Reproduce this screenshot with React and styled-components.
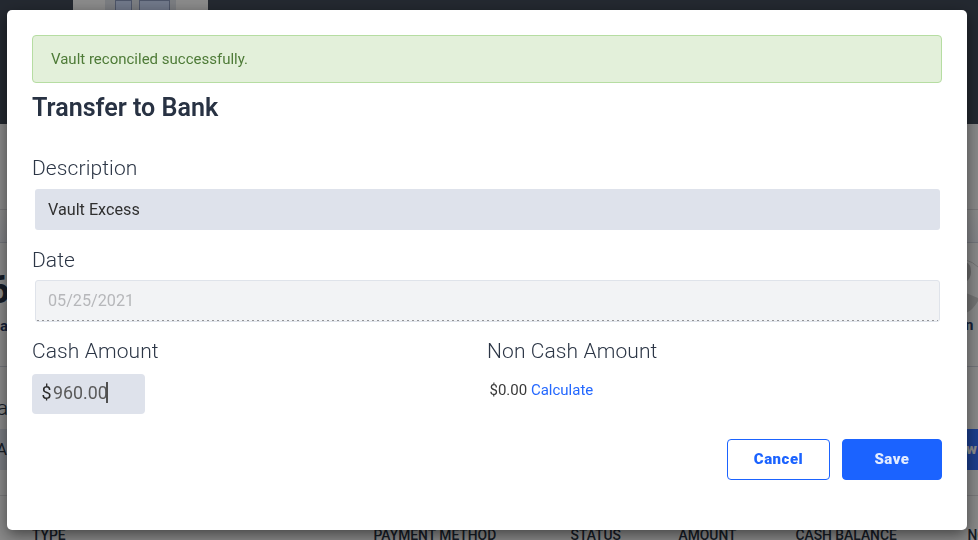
import React from "react";
import styled, { createGlobalStyle } from "styled-components";

const GlobalStyle = createGlobalStyle`
  * { box-sizing: border-box; }
  body { margin: 0; font-family: Roboto, "Liberation Sans", sans-serif; overflow: hidden; }
`;

const Page = styled.div`
  height: 540px;
  overflow: hidden;
  background: #fafafa;
  color: #2a3444;
`;

const Header = styled.header`
  height: 124px;
  padding-left: 73px;
  background: #414a58;
`;

const Illustration = styled.svg`
  display: block;
`;

const Strip = styled.div`
  height: ${(p) => p.$height}px;
  background: ${(p) => p.$background || "#fafafa"};
  border-bottom: ${(p) => (p.$line ? "1px solid #dcdcdf" : "0")};
`;

const SplitRow = styled.div`
  height: ${(p) => p.$height}px;
  display: flex;
  justify-content: space-between;
  border-top: ${(p) => (p.$card ? "1px solid #cfd3de" : "0")};
  border-bottom: ${(p) => (p.$card ? "1px solid #cfd3de" : "0")};
`;

const LeftEdge = styled.div`
  width: 8px;
  display: flex;
  flex-direction: column;
  align-items: flex-end;
  white-space: nowrap;
`;

const RightEdge = styled.div`
  width: 12px;
  white-space: nowrap;
`;

const Balance = styled.div`
  margin: 26px -2px 0 0;
  font-size: 39px;
  line-height: 42px;
  font-weight: 700;
  color: #283448;
`;

const BalanceLabel = styled.div`
  margin-top: 5px;
  font-size: 15px;
  line-height: 20px;
  font-weight: 700;
  color: #283c68;
`;

const Avatar = styled.svg`
  display: block;
  margin-top: 15px;
`;

const AvatarLabel = styled.div`
  font-size: 15px;
  line-height: 20px;
  margin: -1px 0 0 -1px;
  font-weight: 700;
  color: #283c68;
`;

const FilterLabel = styled.div`
  height: 62px;
  padding-top: 27px;
  font-size: 21px;
  line-height: 28px;
  font-weight: 300;
`;

const FilterInput = styled.div`
  width: 30px;
  height: 41px;
  padding-right: 1px;
  font-size: 16px;
  line-height: 41px;
  text-align: right;
  background: #dce1eb;
`;

const FilterButton = styled.div`
  height: 41px;
  margin-top: 62px;
  background: #3470ff;
  color: #fff;
  font-size: 15px;
  font-weight: 900;
  line-height: 41px;
`;

const TableHead = styled.div`
  display: grid;
  grid-template-columns: 341.5px 197px 108px 117px 172px 60px;
  padding: 30px 0 0 32px;
  font-size: 13.85px;
  line-height: 18px;
  font-weight: 500;
  white-space: nowrap;
`;

const Scrim = styled.div`
  position: fixed;
  inset: 0;
  display: flex;
  padding: 10px 11px 10px 7px;
  background: rgba(0, 0, 0, 0.45);
`;

const Dialog = styled.section`
  width: 960px;
  height: 520px;
  padding: 25px;
  border-radius: 5px;
  background: #fff;
  box-shadow: 0 5px 15px rgba(0, 0, 0, 0.5);
`;

const Alert = styled.div`
  height: 48px;
  padding: 0 18px;
  border: 1px solid #b6dda2;
  border-radius: 4px;
  background: #e3f0da;
  color: #4e7b37;
  font-size: 15px;
  line-height: 46px;
`;

const Title = styled.h2`
  margin: 8px 0 0;
  height: 64px;
  font-size: 25.1px;
  line-height: 34px;
  font-weight: 600;
  color: #283243;
`;

const Label = styled.label`
  display: block;
  height: ${(p) => (p.$tight ? 33 : 34)}px;
  font-size: 21px;
  letter-spacing: 0.1px;
  line-height: 26px;
  font-weight: 300;
  color: #2c3646;
`;

const Field = styled.div`
  position: relative;
  height: 41px;
  margin: 0 2px 17px 3px;
  padding: 0 13px;
  border-radius: 3px;
  background: #dee2eb;
  color: #303030;
  font-size: 16.2px;
  line-height: 41px;
`;

const DateField = styled(Field)`
  height: 42px;
  margin-bottom: 16px;
  padding: 0 12px;
  border: 1px solid #dfe3ea;
  background: #f2f3f5;
  color: #b6b7ba;
  line-height: 40px;

  &::after {
    content: "";
    position: absolute;
    left: 1px;
    right: 1px;
    bottom: 0;
    height: 1px;
    background: repeating-linear-gradient(90deg, #929396 0 2px, transparent 2px 5px);
  }
`;

const Amounts = styled.div`
  display: grid;
  grid-template-columns: 455px 1fr;
  height: 101px;
`;

const CashInput = styled.div`
  display: flex;
  align-items: center;
  width: 113px;
  height: 40px;
  margin-top: 2px;
  padding: 0 0 3px 9.5px;
  border-radius: 4px;
  background: #dee2eb;
  color: #5a5a5a;
  font-size: 17.8px;
`;

const Currency = styled.span`
  width: 11.5px;
  color: #292929;
`;

const Caret = styled.span`
  width: 2px;
  height: 21px;
  margin-left: -2px;
  background: #505050;
`;

const NonCash = styled.div`
  padding: 8px 0 0 2.5px;
  font-size: 15px;
  line-height: 20px;
  color: #393939;
`;

const TextLink = styled.a`
  color: #2468ff;
`;

const Actions = styled.div`
  display: flex;
  justify-content: flex-end;
  gap: 12px;
`;

const Button = styled.button`
  width: ${(p) => (p.$primary ? 100 : 103)}px;
  height: 41px;
  padding: 0 0 1px;
  border: 1px solid #1b63ff;
  border-radius: 4px;
  background: ${(p) => (p.$primary ? "#1b63ff" : "#fff")};
  color: ${(p) => (p.$primary ? "#e3ecff" : "#1b63ff")};
  font: 900 15px Roboto, "Liberation Sans", sans-serif;
  letter-spacing: 0.5px;
`;

export default function App() {
  return (
    <>
      <GlobalStyle />
      <Page>
        <Header>
          <Illustration width="135" height="10">
            <rect width="135" height="10" fill="#fbfbfb" />
            <rect x="32" width="71" height="10" fill="#dfe3ea" />
            <rect x="42.5" y="0.5" width="16" height="14" fill="#ccdafa" stroke="#8c9abd" />
            <rect x="66.5" y="0.5" width="30" height="14" fill="#ccdafa" stroke="#8c9abd" />
          </Illustration>
        </Header>
        <Strip $height={86} $line />
        <Strip $height={32} $background="linear-gradient(#fafafa, #eceef5)" />
        <SplitRow $height={125} $card>
          <LeftEdge>
            <Balance>6</Balance>
            <BalanceLabel>Ba</BalanceLabel>
          </LeftEdge>
          <RightEdge>
            <Avatar width="12" height="58" viewBox="0 0 12 58">
              <path d="M0 2Q7 4 12 9" fill="none" stroke="#d1d1d1" />
              <path d="M0 4Q5 6 5 14Q5 20 0 24Z" fill="#bebebe" />
              <path d="M0 35L12 40V43Q7 52 0 55Z" fill="#d1d1d1" />
            </Avatar>
            <AvatarLabel>n</AvatarLabel>
          </RightEdge>
        </SplitRow>
        <SplitRow $height={128}>
          <LeftEdge>
            <FilterLabel>a</FilterLabel>
            <FilterInput>A</FilterInput>
          </LeftEdge>
          <RightEdge>
            <FilterButton>w</FilterButton>
          </RightEdge>
        </SplitRow>
        <Strip $height={1} $background="#dcdcdf" />
        <TableHead>
          <span>TYPE</span>
          <span>PAYMENT METHOD</span>
          <span>STATUS</span>
          <span>AMOUNT</span>
          <span>CASH BALANCE</span>
          <span>NON</span>
        </TableHead>
      </Page>
      <Scrim>
        <Dialog role="dialog">
          <Alert>Vault reconciled successfully.</Alert>
          <Title>Transfer to Bank</Title>
          <Label>Description</Label>
          <Field>Vault Excess</Field>
          <Label $tight>Date</Label>
          <DateField>05/25/2021</DateField>
          <Amounts>
            <div>
              <Label>Cash Amount</Label>
              <CashInput>
                <Currency>$</Currency>960.00<Caret />
              </CashInput>
            </div>
            <div>
              <Label>Non Cash Amount</Label>
              <NonCash>
                $0.00 <TextLink>Calculate</TextLink>
              </NonCash>
            </div>
          </Amounts>
          <Actions>
            <Button>Cancel</Button>
            <Button $primary>Save</Button>
          </Actions>
        </Dialog>
      </Scrim>
    </>
  );
}
